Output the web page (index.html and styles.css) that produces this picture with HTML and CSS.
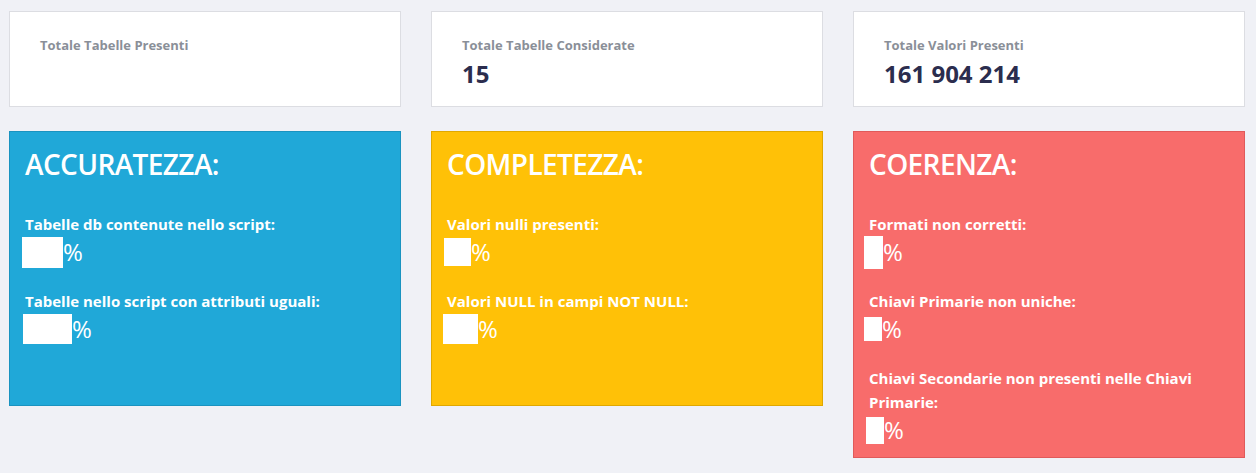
FILE: index.html
```html
<!DOCTYPE html>
<html lang="it">
<head>
<meta charset="utf-8">
<title>Dashboard</title>
<link rel="stylesheet" href="styles.css">
</head>
<body>
<main class="page">
  <section class="stats">
    <div class="stat">
      <div class="stat-label">Totale Tabelle Presenti</div>
      <div class="stat-value"></div>
    </div>
    <div class="stat">
      <div class="stat-label">Totale Tabelle Considerate</div>
      <div class="stat-value">15</div>
    </div>
    <div class="stat">
      <div class="stat-label">Totale Valori Presenti</div>
      <div class="stat-value">161 904 214</div>
    </div>
  </section>

  <section class="metrics">
    <div class="metric metric-info">
      <h2 class="metric-title">ACCURATEZZA:</h2>
      <div class="item">
        <div class="item-label">Tabelle db contenute nello script:</div>
        <div class="item-value"><span class="box box-a1"></span><span class="pct">%</span></div>
      </div>
      <div class="item">
        <div class="item-label">Tabelle nello script con attributi uguali:</div>
        <div class="item-value"><span class="box box-a2"></span><span class="pct">%</span></div>
      </div>
    </div>

    <div class="metric metric-warning">
      <h2 class="metric-title">COMPLETEZZA:</h2>
      <div class="item">
        <div class="item-label">Valori nulli presenti:</div>
        <div class="item-value"><span class="box box-b1"></span><span class="pct">%</span></div>
      </div>
      <div class="item">
        <div class="item-label">Valori NULL in campi NOT NULL:</div>
        <div class="item-value"><span class="box box-b2"></span><span class="pct">%</span></div>
      </div>
    </div>

    <div class="metric metric-danger">
      <h2 class="metric-title">COERENZA:</h2>
      <div class="item">
        <div class="item-label">Formati non corretti:</div>
        <div class="item-value"><span class="box box-c1"></span><span class="pct">%</span></div>
      </div>
      <div class="item">
        <div class="item-label">Chiavi Primarie non uniche:</div>
        <div class="item-value"><span class="box box-c2"></span><span class="pct">%</span></div>
      </div>
      <div class="item">
        <div class="item-label">Chiavi Secondarie non presenti nelle Chiavi Primarie:</div>
        <div class="item-value"><span class="box box-c3"></span><span class="pct">%</span></div>
      </div>
    </div>
  </section>
</main>
</body>
</html>
```

FILE: styles.css
```css
* { box-sizing: border-box; }

html, body {
  margin: 0;
  padding: 0;
  background: #f0f1f6;
  font-family: "Open Sans", "Noto Sans", "Liberation Sans", sans-serif;
}

.page {
  padding: 11px 11px 0 9px;
}

.stats,
.metrics {
  display: grid;
  grid-template-columns: repeat(3, 392px);
  column-gap: 30px;
  align-items: start;
}

.stats {
  margin-bottom: 24px;
}

.stat {
  height: 96px;
  background: #ffffff;
  border: 1px solid #dcdde2;
  padding: 24px 30px 0 30px;
}

.stat-label {
  font-size: 13px;
  font-weight: 700;
  line-height: 18px;
  color: #8a8f98;
}

.stat-value {
  margin-top: 5px;
  font-size: 24px;
  font-weight: 700;
  line-height: 30px;
  color: #2b2d4e;
}

.metric {
  min-height: 275px;
  border: 1px solid;
  padding: 15px 15px 11px 15px;
  color: #ffffff;
}

.metric-info { background: #20a8d8; border-color: #1a93c0; }
.metric-warning { background: #ffc107; border-color: #e0a800; }
.metric-danger { background: #f86c6b; border-color: #e05a5a; }

.metric-title {
  margin: 0 0 31px 0;
  font-size: 28px;
  font-weight: 600;
  letter-spacing: -0.6px;
  line-height: 34px;
}

.item + .item {
  margin-top: 21px;
}

.item-label {
  font-size: 15px;
  font-weight: 700;
  line-height: 24px;
}

.item-value {
  display: flex;
  align-items: center;
  height: 32px;
}

.box {
  display: block;
  background: #ffffff;
}

.pct {
  font-size: 24px;
  line-height: 30px;
}

.box-a1 { width: 41px; height: 31px; margin-left: -3px; }
.box-a2 { width: 49px; height: 30px; margin-left: -2px; }
.box-b1 { width: 27px; height: 28px; margin-left: -3px; }
.box-b2 { width: 35px; height: 30px; margin-left: -4px; }
.box-c1 { width: 19px; height: 33px; margin-left: -5px; }
.box-c2 { width: 18px; height: 24px; margin-left: -5px; }
.box-c3 { width: 18px; height: 27px; margin-left: -3px; }
```
